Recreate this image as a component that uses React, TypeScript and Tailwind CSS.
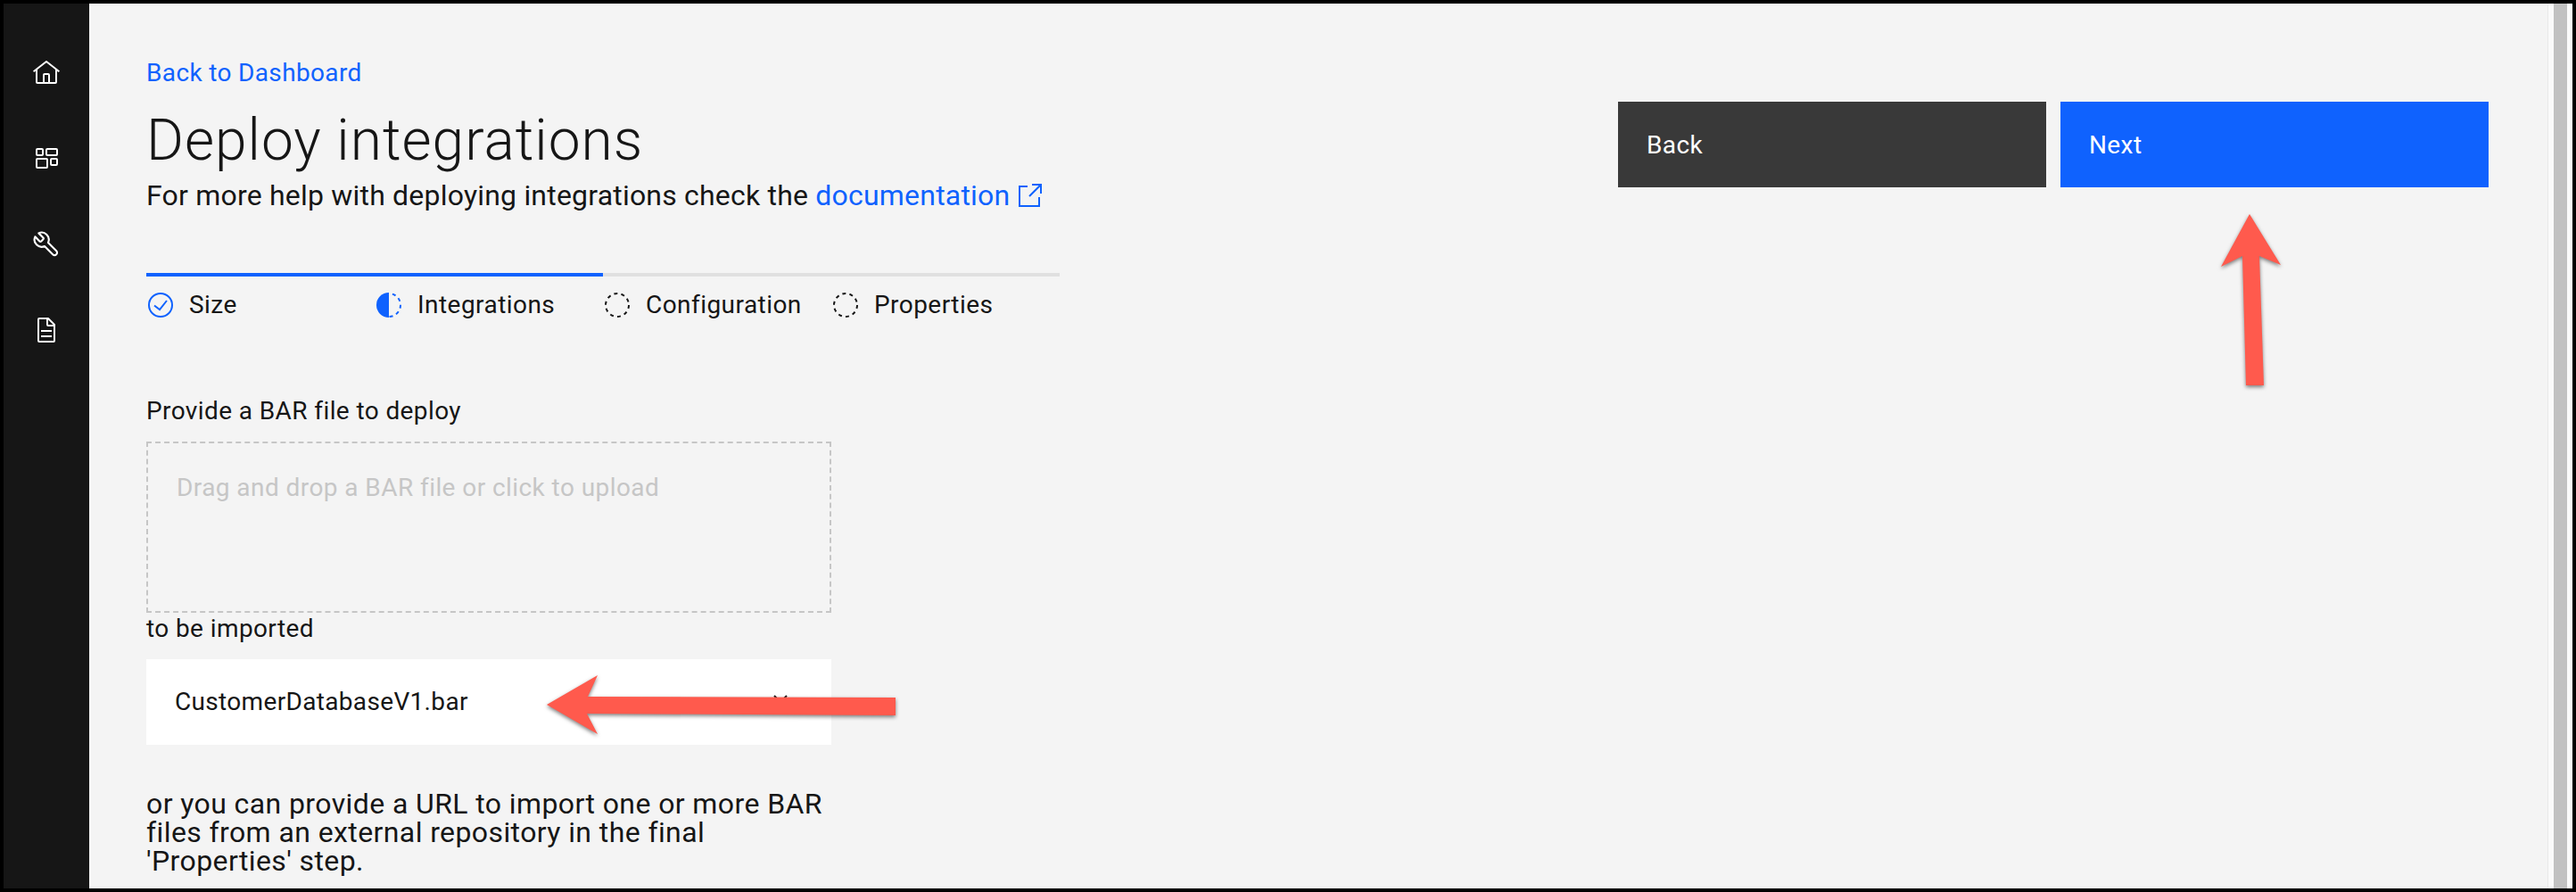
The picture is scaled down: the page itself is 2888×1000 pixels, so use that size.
const font = "font-['Roboto',sans-serif]";

function HomeIcon() {
  return (
    <svg width="32" height="32" viewBox="0 0 32 32" fill="#ffffff">
      <path d="M16.6123,2.2138a1.01,1.01,0,0,0-1.2427,0L1,13.4194l1.2427,1.5717L4,13.6209V26a2.0023,2.0023,0,0,0,2,2H26a2.0023,2.0023,0,0,0,2-2V13.63L29.7573,15,31,13.4282ZM18,26H14V18h4Zm2,0V18a2.0023,2.0023,0,0,0-2-2H14a2.0023,2.0023,0,0,0-2,2v8H6V12.0615l10-7.79,10,7.8005V26Z" />
    </svg>
  );
}

function AppsIcon() {
  return (
    <svg width="32" height="32" viewBox="0 0 32 32" fill="none" stroke="#ffffff" strokeWidth="2">
      <rect x="5" y="5" width="7" height="7" rx="1" />
      <rect x="16" y="5" width="12" height="7" rx="1" />
      <rect x="5" y="16" width="12" height="10" rx="1" />
      <rect x="21" y="16" width="7" height="7" rx="1" />
    </svg>
  );
}

function WrenchIcon() {
  return (
    <svg width="32" height="32" viewBox="0 0 24 24" fill="none" stroke="#ffffff" strokeWidth="1.6" strokeLinecap="round" strokeLinejoin="round" className="-scale-x-100">
      <path d="M14.7 6.3a1 1 0 0 0 0 1.4l1.6 1.6a1 1 0 0 0 1.4 0l3.77-3.77a6 6 0 0 1-7.94 7.94l-6.91 6.91a2.12 2.12 0 0 1-3-3l6.91-6.91a6 6 0 0 1 7.94-7.94l-3.76 3.76z" />
    </svg>
  );
}

function DocIcon() {
  return (
    <svg width="32" height="32" viewBox="0 0 32 32" fill="#ffffff">
      <path d="M25.7,9.3l-7-7A.9087.9087,0,0,0,18,2H8A2.0058,2.0058,0,0,0,6,4V28a2.0058,2.0058,0,0,0,2,2H24a2.0058,2.0058,0,0,0,2-2V10A.9092.9092,0,0,0,25.7,9.3ZM18,4.4,23.6,10H18ZM24,28H8V4h8v6a2.0058,2.0058,0,0,0,2,2h6Z" />
      <rect x="10" y="22" width="12" height="2" />
      <rect x="10" y="16" width="12" height="2" />
    </svg>
  );
}

function StepIcon({ kind }: { kind: "done" | "current" | "todo" }) {
  if (kind === "done") {
    return (
      <svg width="32" height="32" viewBox="0 0 32 32" fill="none">
        <circle cx="16" cy="16" r="13" stroke="#0f62fe" strokeWidth="2" />
        <path d="M9 16.5l6 4.5 8-10" stroke="#0f62fe" strokeWidth="2" />
      </svg>
    );
  }
  if (kind === "current") {
    return (
      <svg width="32" height="32" viewBox="0 0 32 32" fill="none">
        <path d="M16 2a14 14 0 0 0 0 28z" fill="#0f62fe" />
        <path d="M16 3a13 13 0 0 1 0 26" stroke="#0f62fe" strokeWidth="2" strokeDasharray="4 4" strokeDashoffset="-4" />
      </svg>
    );
  }
  return (
    <svg width="32" height="32" viewBox="0 0 32 32" fill="none">
      <circle cx="16" cy="16" r="13" stroke="#161616" strokeWidth="2" strokeDasharray="4 4.17" />
    </svg>
  );
}

function Step({ kind, label }: { kind: "done" | "current" | "todo"; label: string }) {
  return (
    <div className="flex w-[256px] items-center gap-4 pt-[14px]">
      <StepIcon kind={kind} />
      <span className="text-[28px] leading-[36px] tracking-[0.45px] text-[#161616]">{label}</span>
    </div>
  );
}

function ExternalIcon() {
  return (
    <svg width="32" height="32" viewBox="0 0 32 32" fill="none" stroke="#0f62fe" strokeWidth="2" className="ml-[6px] inline-block align-[-4px]">
      <path d="M14 7H5v22h22V19" />
      <path d="M19 5h10v10M28.5 5.5L16 18" />
    </svg>
  );
}

function CloseIcon() {
  return (
    <svg width="32" height="32" viewBox="0 0 32 32" fill="none" stroke="#161616" strokeWidth="2" className="mb-px mr-[9px]">
      <path d="M9 9l14 14M23 9L9 23" />
    </svg>
  );
}

export default function App() {
  return (
    <div className={`relative flex h-[1000px] w-[2888px] overflow-hidden border-4 border-black bg-[#f4f4f4] ${font}`}>
      <nav className="flex w-24 shrink-0 flex-col items-center gap-16 bg-[#161616] pt-[62px]">
        <HomeIcon />
        <AppsIcon />
        <WrenchIcon />
        <DocIcon />
      </nav>

      <main className="flex flex-1 justify-between pl-16 pr-[66px]">
        <div className="w-[1024px]">
          <a className="mt-[60px] block text-[28px] leading-[36px] tracking-[0.35px] text-[#0f62fe]">Back to Dashboard</a>
          <h1 className="mt-[18px] text-[64px] font-light leading-[80px] tracking-[1px] text-[#161616]">Deploy integrations</h1>
          <p className="mt-px text-[32px] leading-[40px] tracking-[0.2px] text-[#161616]">
            For more help with deploying integrations check the{" "}
            <a className="text-[#0f62fe]">documentation</a>
            <ExternalIcon />
          </p>

          <div className="mt-[67px] flex h-1 w-full bg-[#e0e0e0]">
            <div className="h-full w-1/2 bg-[#0f62fe]" />
          </div>
          <div className="flex">
            <Step kind="done" label="Size" />
            <Step kind="current" label="Integrations" />
            <Step kind="todo" label="Configuration" />
            <Step kind="todo" label="Properties" />
          </div>

          <div className="mt-[83px] w-[768px]">
            <label className="block text-[28px] leading-[36px] tracking-[0.4px] text-[#161616]">Provide a BAR file to deploy</label>
            <div className="mt-[16px] h-[192px] border-2 border-dashed border-[#c6c6c6] px-8 pt-8">
              <span className="block text-[28px] leading-[36px] tracking-[0.43px] text-[#c6c6c6]">Drag and drop a BAR file or click to upload</span>
            </div>
            <p className="text-[28px] leading-[36px] tracking-[0.4px] text-[#161616]">to be imported</p>
            <div className="mt-[16px] flex h-[96px] items-center justify-between bg-white px-8 text-[28px] tracking-[0.33px] text-[#161616]">
              <span>CustomerDatabaseV1.bar</span>
              <CloseIcon />
            </div>
            <p className="mt-[50px] text-[32px] leading-[32px] tracking-[0.4px] text-[#161616]">
              or you can provide a URL to import one or more BAR files from an external repository in the final 'Properties' step.
            </p>
          </div>
        </div>

        <div className="mt-[110px] flex gap-4">
          <button className="h-24 w-[480px] bg-[#393939] px-8 pt-[2px] text-left text-[28px] tracking-[0.4px] text-white">Back</button>
          <button className="h-24 w-[480px] bg-[#0f62fe] px-8 pt-[2px] text-left text-[28px] tracking-[0.4px] text-white">Next</button>
        </div>
      </main>

      <div className="flex w-7 shrink-0 justify-center border-l border-[#e8e8e8] bg-[#fafafa] px-[6px]">
        <div className="h-full w-4 bg-[#c1c1c1]" />
      </div>

      <svg className="pointer-events-none absolute left-[596px] top-[746px] drop-shadow-[0_2px_2px_rgba(0,0,0,0.5)]" width="420" height="90" viewBox="0 0 420 90" fill="#ff5a4d">
        <path d="M13 40 L70 7 L59 31 L404 32 L404 52 L58 50 L70 73 Z" />
      </svg>
      <svg className="pointer-events-none absolute left-[2476px] top-[226px] drop-shadow-[0_2px_2px_rgba(0,0,0,0.5)]" width="90" height="220" viewBox="0 0 90 220" fill="#ff5a4d">
        <path d="M42 10 L77 67 L53 57 L58 202 L38 202 L34 57 L10 69 Z" />
      </svg>
    </div>
  );
}
